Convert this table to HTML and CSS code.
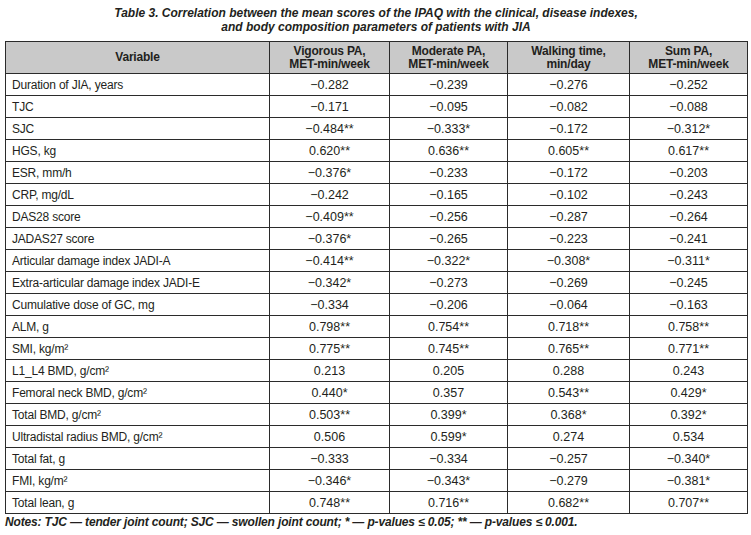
FILE: index.html
```html
<!DOCTYPE html>
<html>
<head>
<meta charset="utf-8">
<link rel="stylesheet" href="styles.css">
</head>
<body>
<div class="page">
  <div class="title">
    <div>Table 3. Correlation between the mean scores of the IPAQ with the clinical, disease indexes,</div>
    <div>and body composition parameters of patients with JIA</div>
  </div>
  <table class="data">
    <colgroup>
      <col class="c-var"><col class="c-1"><col class="c-2"><col class="c-3"><col class="c-4">
    </colgroup>
    <thead>
      <tr>
        <th>Variable</th>
        <th>Vigorous PA,<br>MET-min/week</th>
        <th>Moderate PA,<br>MET-min/week</th>
        <th>Walking time,<br>min/day</th>
        <th>Sum PA,<br>MET-min/week</th>
      </tr>
    </thead>
    <tbody>
      <tr><td>Duration of JIA, years</td><td>−0.282</td><td>−0.239</td><td>−0.276</td><td>−0.252</td></tr>
      <tr><td>TJC</td><td>−0.171</td><td>−0.095</td><td>−0.082</td><td>−0.088</td></tr>
      <tr><td>SJC</td><td>−0.484**</td><td>−0.333*</td><td>−0.172</td><td>−0.312*</td></tr>
      <tr><td>HGS, kg</td><td>0.620**</td><td>0.636**</td><td>0.605**</td><td>0.617**</td></tr>
      <tr><td>ESR, mm/h</td><td>−0.376*</td><td>−0.233</td><td>−0.172</td><td>−0.203</td></tr>
      <tr><td>CRP, mg/dL</td><td>−0.242</td><td>−0.165</td><td>−0.102</td><td>−0.243</td></tr>
      <tr><td>DAS28 score</td><td>−0.409**</td><td>−0.256</td><td>−0.287</td><td>−0.264</td></tr>
      <tr><td>JADAS27 score</td><td>−0.376*</td><td>−0.265</td><td>−0.223</td><td>−0.241</td></tr>
      <tr><td>Articular damage index JADI-A</td><td>−0.414**</td><td>−0.322*</td><td>−0.308*</td><td>−0.311*</td></tr>
      <tr><td>Extra-articular damage index JADI-E</td><td>−0.342*</td><td>−0.273</td><td>−0.269</td><td>−0.245</td></tr>
      <tr><td>Cumulative dose of GC, mg</td><td>−0.334</td><td>−0.206</td><td>−0.064</td><td>−0.163</td></tr>
      <tr><td>ALM, g</td><td>0.798**</td><td>0.754**</td><td>0.718**</td><td>0.758**</td></tr>
      <tr><td>SMI, kg/m²</td><td>0.775**</td><td>0.745**</td><td>0.765**</td><td>0.771**</td></tr>
      <tr><td>L1_L4 BMD, g/cm²</td><td>0.213</td><td>0.205</td><td>0.288</td><td>0.243</td></tr>
      <tr><td>Femoral neck BMD, g/cm²</td><td>0.440*</td><td>0.357</td><td>0.543**</td><td>0.429*</td></tr>
      <tr><td>Total BMD, g/cm²</td><td>0.503**</td><td>0.399*</td><td>0.368*</td><td>0.392*</td></tr>
      <tr><td>Ultradistal radius BMD, g/cm²</td><td>0.506</td><td>0.599*</td><td>0.274</td><td>0.534</td></tr>
      <tr><td>Total fat, g</td><td>−0.333</td><td>−0.334</td><td>−0.257</td><td>−0.340*</td></tr>
      <tr><td>FMI, kg/m²</td><td>−0.346*</td><td>−0.343*</td><td>−0.279</td><td>−0.381*</td></tr>
      <tr><td>Total lean, g</td><td>0.748**</td><td>0.716**</td><td>0.682**</td><td>0.707**</td></tr>
    </tbody>
  </table>
  <div class="notes">Notes: TJC — tender joint count; SJC — swollen joint count; * — p-values ≤ 0.05; ** — p-values ≤ 0.001.</div>
</div>
</body>
</html>
```

FILE: styles.css
```css
html, body {
  margin: 0;
  padding: 0;
  background: #ffffff;
}
.page {
  width: 751px;
  padding: 6px 0 0 5px;
  box-sizing: border-box;
  color: #231f20;
}
.title {
  font-family: "Liberation Sans", Arial, sans-serif;
  font-weight: bold;
  font-style: italic;
  font-size: 12px;
  line-height: 14px;
  text-align: center;
  width: 742px;
  margin-bottom: 7px;
}
.data {
  border-collapse: collapse;
  width: 742px;
  table-layout: fixed;
  font-family: "Liberation Sans", Arial, sans-serif;
  font-size: 12.5px;
}
.c-var { width: 264px; }
.c-1 { width: 120px; }
.c-2 { width: 118px; }
.c-3 { width: 122px; }
.c-4 { width: 118px; }
.data th, .data td {
  border: 1px solid #2b2b2b;
  padding: 0;
}
.data th {
  background: #c9c9c9;
  font-family: "Liberation Sans Narrow", "Liberation Sans", Arial, sans-serif;
  font-weight: bold;
  font-size: 12px;
  letter-spacing: -0.2px;
  height: 31px;
  line-height: 13px;
  text-align: center;
}
.data td {
  height: 21px;
  text-align: center;
}
.data td:first-child {
  font-family: "Liberation Sans Narrow", "Liberation Sans", Arial, sans-serif;
  font-size: 12px;
  letter-spacing: -0.2px;
  text-align: left;
  padding-left: 6px;
}
.notes {
  font-family: "Liberation Sans", Arial, sans-serif;
  font-weight: bold;
  font-style: italic;
  font-size: 12px;
  line-height: 14px;
  margin-top: 1px;
  letter-spacing: -0.15px;
}
```
